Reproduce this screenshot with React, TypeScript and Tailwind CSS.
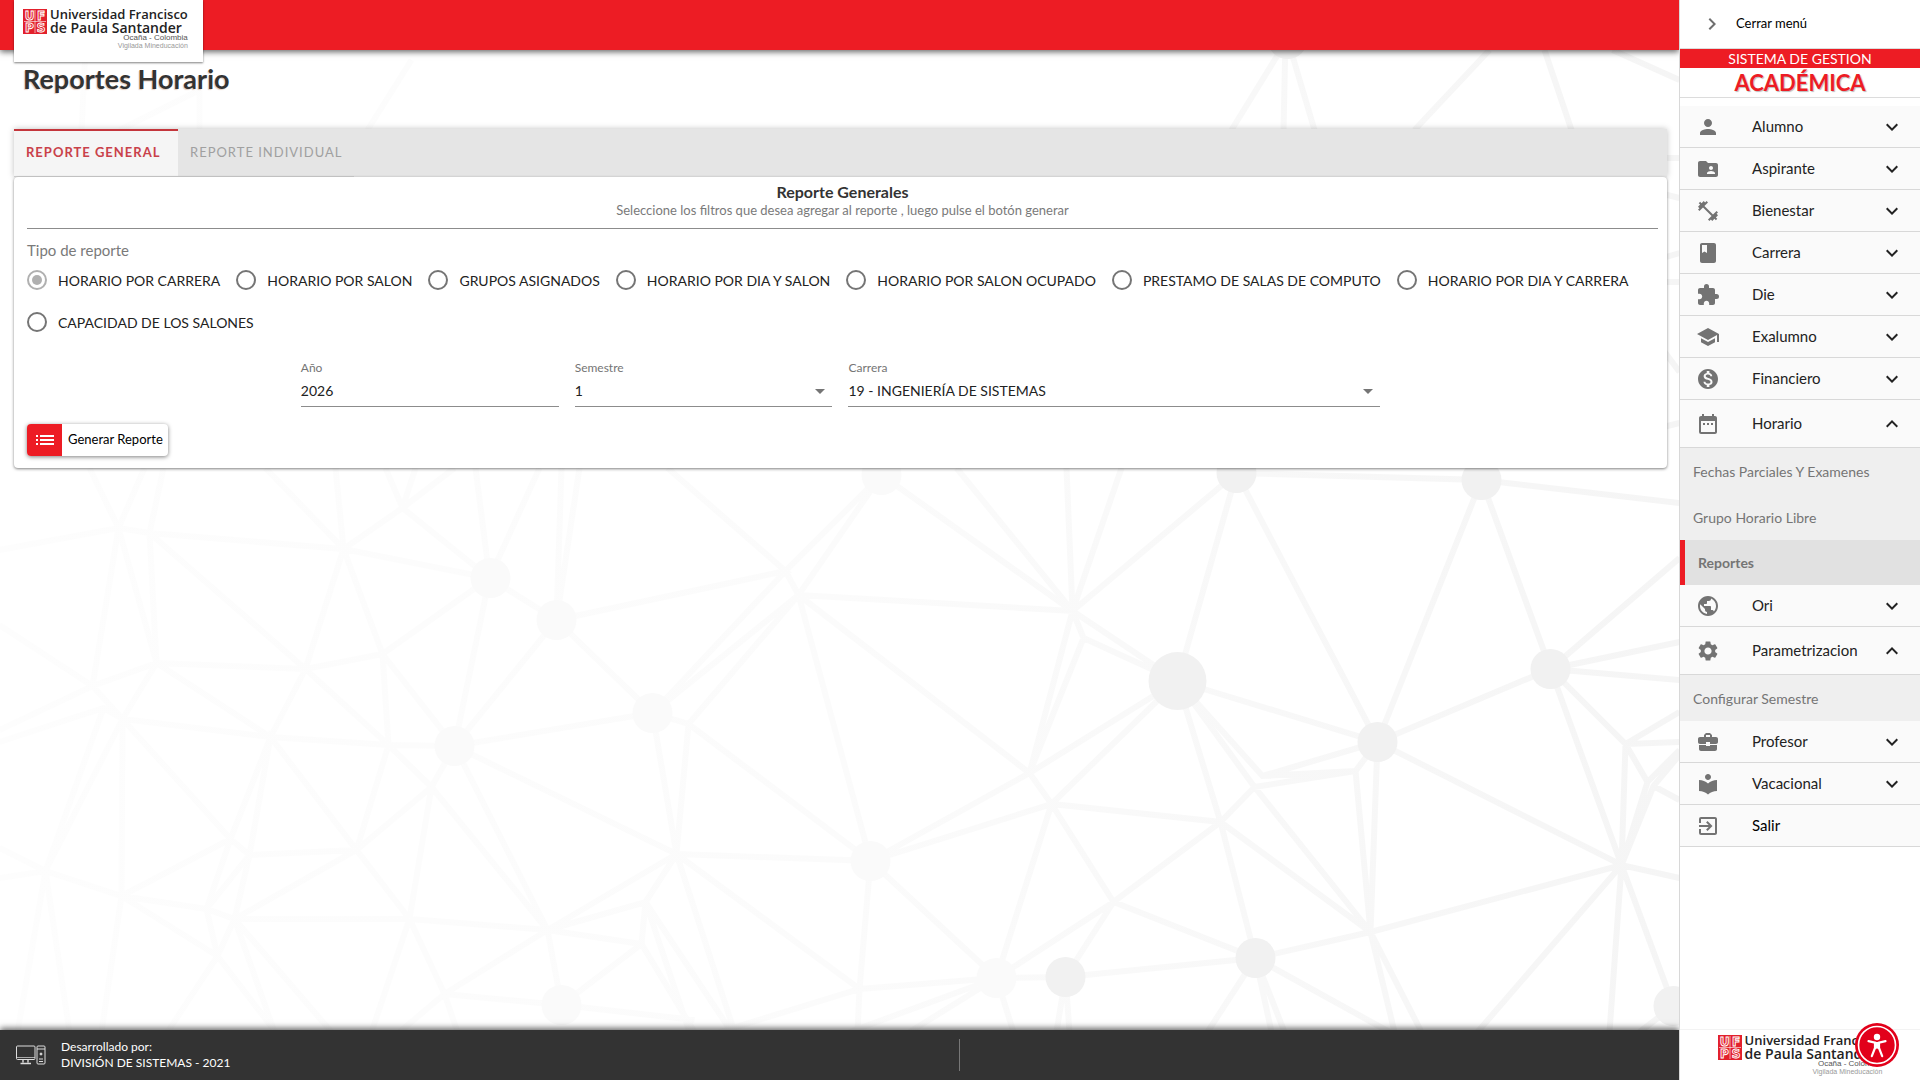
import { useState } from 'react';
import type { IconType } from 'react-icons';
import {
  MdArrowDropDown,
  MdBook,
  MdBusinessCenter,
  MdChevronRight,
  MdDateRange,
  MdExitToApp,
  MdExpandLess,
  MdExpandMore,
  MdExtension,
  MdFitnessCenter,
  MdFolderShared,
  MdList,
  MdLocalLibrary,
  MdMonetizationOn,
  MdPerson,
  MdPublic,
  MdSchool,
  MdSettings,
} from 'react-icons/md';

interface MenuItem {
  label: string;
  icon: IconType;
  children?: string[];
  link?: boolean;
}

const menu: MenuItem[] = [
  { label: 'Alumno', icon: MdPerson },
  { label: 'Aspirante', icon: MdFolderShared },
  { label: 'Bienestar', icon: MdFitnessCenter },
  { label: 'Carrera', icon: MdBook },
  { label: 'Die', icon: MdExtension },
  { label: 'Exalumno', icon: MdSchool },
  { label: 'Financiero', icon: MdMonetizationOn },
  {
    label: 'Horario',
    icon: MdDateRange,
    children: ['Fechas Parciales Y Examenes', 'Grupo Horario Libre', 'Reportes'],
  },
  { label: 'Ori', icon: MdPublic },
  { label: 'Parametrizacion', icon: MdSettings, children: ['Configurar Semestre'] },
  { label: 'Profesor', icon: MdBusinessCenter },
  { label: 'Vacacional', icon: MdLocalLibrary },
  { label: 'Salir', icon: MdExitToApp, link: true },
];

const tipos = [
  'HORARIO POR CARRERA',
  'HORARIO POR SALON',
  'GRUPOS ASIGNADOS',
  'HORARIO POR DIA Y SALON',
  'HORARIO POR SALON OCUPADO',
  'PRESTAMO DE SALAS DE COMPUTO',
  'HORARIO POR DIA Y CARRERA',
  'CAPACIDAD DE LOS SALONES',
];

// x, y, radio
const nodos = [
  [491, 578, 20], [557, 620, 20], [455, 746, 20], [653, 713, 20], [871, 861, 20],
  [562, 1005, 20], [882, 475, 20], [997, 978, 20],
];
const nodosOscuros = [
  [1237, 473, 20], [1482, 480, 20], [1178, 681, 29], [1551, 669, 20], [1378, 742, 20],
  [1066, 977, 20], [1256, 958, 20], [1674, 1006, 20], [1288, 39, 20],
];

const lineas =
  'M0 550L119 528L150 533L344 549L490 578L557 620L653 713L689 724L871 861L997 978L1066 977L1256 958L1371 932L1622 865L1680 878' +
  'M90 468L119 528L145 468M119 528L93 686L0 625M119 528L157 663L150 533L164 468M150 533L306 669L383 654L344 549L266 468M344 549L336 468' +
  'M344 549L403 508L386 468M403 508L416 468M403 508L455 468M403 508L490 578L476 468M490 578L540 468M490 578L383 654L455 746L490 578' +
  'M557 620L562 468M557 620L580 468M557 620L786 571L668 468M557 620L455 746L653 713L786 571L882 475L799 595L786 571M653 713L799 595' +
  'M0 730L93 686L157 663L306 669L344 549M0 742L104 708L123 719L157 663L271 737L306 669L389 745L383 654M93 686L123 719L271 737L389 745L455 746' +
  'M104 708L46 871L123 719L122 896M123 719L231 839L250 855L271 737L357 850L389 745L432 787L455 746L677 854L653 713M677 854L689 724L799 595' +
  'M271 737L231 839L207 909L250 855L357 850L432 787L410 919M432 787L548 930L455 746M0 848L46 871L122 896L207 909L235 919L410 919L548 930L642 944L646 902L548 930' +
  'M0 878L46 871L18 1032M46 871L70 1032M122 896L102 1032M122 896L231 839M122 896L218 956L235 919L357 850L410 919L372 1032M235 919L250 855' +
  'M207 909L218 956L276 1032M218 956L168 1032M235 919L275 1032M235 919L332 1032M410 919L445 994L548 930L562 1005L642 944L695 1032' +
  'M445 994L400 1032M445 994L458 1032M445 994L562 1005L695 1020M548 930L677 854L646 902L690 1032M646 902L732 1032M677 854L735 1032' +
  'M677 854L871 861L860 989L677 854M799 595L871 861M799 595L1030 773M799 595L1073 611L882 475M1073 611L957 468M1073 611L1067 468M1073 611L1122 468' +
  'M1073 611L1237 473L1178 681L1073 611L1084 638L1178 681M1073 611L1030 773L1084 638M1178 681L1030 773L871 861L1052 804L1178 681M1030 773L1052 804' +
  'M1178 681L1378 742L1237 473L1482 480L1378 742L1551 669L1482 480L1680 503M1178 681L1263 776L1356 771L1378 742L1263 776M1178 681L1255 787L1356 771' +
  'M1178 681L1221 822L1255 787L1371 932L1221 822L1052 804L1114 902L1221 822L1256 958L1114 902L1066 977M1052 804L997 978L1114 902' +
  'M1356 771L1371 932L1378 742L1622 865L1551 669L1680 558M1551 669L1680 642M1551 669L1680 680M1551 669L1626 744L1622 865L1648 782L1626 744L1680 742' +
  'M1626 744L1680 712M1622 865L1654 786L1680 755M1648 782L1680 750M1654 786L1680 800M1622 865L1478 1032M1622 865L1610 1032M1622 865L1674 1006L1640 1032' +
  'M1371 932L1395 1032M1371 932L1422 1032M1256 958L1208 1032M1256 958L1272 1032M1256 958L1285 1032M1256 958L1390 1032M1066 977L1057 1032M1066 977L1070 1032' +
  'M997 978L1014 1032M997 978L860 989L720 1032M997 978L850 1032M997 978L910 1032M860 989L858 1032' +
  'M1288 39L1232 130M1286 39L1284 130M1288 39L1315 130M1490 50L1415 130M1545 50L1572 130M1613 50L1680 80' +
  'M1660 158L1680 158M1660 193L1680 198M1660 259L1680 253M1660 282L1680 282M1660 345L1680 372M1660 428L1680 423' +
  'M86 50L82 130M200 90L120 130M200 90L200 130M412 60L368 130';

function Fondo() {
  return (
    <svg
      className="absolute inset-0 -z-10 h-full w-full"
      viewBox="0 0 1680 1080"
      preserveAspectRatio="xMidYMid slice"
      aria-hidden="true"
    >
      <defs>
        <linearGradient id="trazo" gradientUnits="userSpaceOnUse" x1="0" y1="0" x2="1680" y2="0">
          <stop offset="0" stopColor="#fdfdfd" />
          <stop offset="0.5" stopColor="#fbfbfb" />
          <stop offset="1" stopColor="#f5f5f5" />
        </linearGradient>
      </defs>
      <path d={lineas} fill="none" stroke="url(#trazo)" strokeWidth="6" />
      {nodos.map(([x, y, r]) => (
        <circle key={`${x}-${y}`} cx={x} cy={y} r={r} fill="#fafafa" />
      ))}
      {nodosOscuros.map(([x, y, r]) => (
        <circle key={`${x}-${y}`} cx={x} cy={y} r={r} fill="#f1f1f1" />
      ))}
    </svg>
  );
}

function Logo() {
  return (
    <div className="flex items-start gap-[3px] text-[#222]">
      <svg className="mt-px h-[25px] w-6 shrink-0" viewBox="0 0 24 25" aria-hidden="true">
        <rect width="24" height="25" fill="#e2202c" />
        <path d="M1 12.500h22M12 1v23" stroke="#fff" strokeWidth="0.6" />
        <g
          fill="#e2202c"
          stroke="#fff"
          strokeWidth="0.9"
          fontFamily="'DejaVu Sans', sans-serif"
          fontWeight="700"
          fontSize="12"
          textAnchor="middle"
        >
          <text x="6.500" y="11">U</text>
          <text x="18" y="11">F</text>
          <text x="6.500" y="23">P</text>
          <text x="18" y="23">S</text>
        </g>
      </svg>
      <div className="flex flex-col whitespace-nowrap font-['Open_Sans',sans-serif] font-semibold leading-[13px]">
        <span className="text-[13px]">Universidad Francisco</span>
        <span className="text-[14px]">de Paula Santander</span>
        <span className="self-end font-['Liberation_Sans',sans-serif] text-[8px] font-normal leading-[8px] text-[#555]">
          Ocaña - Colombia
        </span>
        <span className="self-end font-['Liberation_Sans',sans-serif] text-[7px] font-normal leading-[7px] text-[#999]">
          Vigilada Mineducación
        </span>
      </div>
    </div>
  );
}

function Sidebar() {
  const [open, setOpen] = useState<string[]>(['Horario', 'Parametrizacion']);

  const toggle = (label: string) => {
    setOpen(open.includes(label) ? open.filter((l) => l !== label) : [...open, label]);
  };

  return (
    <aside className="relative flex w-[241px] shrink-0 flex-col border-l border-[#d8d8d8] bg-white">
      <button type="button" className="flex h-12 items-center gap-3 pl-5 text-[13px] text-black">
        <MdChevronRight className="size-6 text-[#6f6f6f]" />
        Cerrar menú
      </button>
      <div className="border-y border-[#dcdcdc] text-center">
        <p className="bg-[#ed1c24] text-[14px] leading-[19px] text-white">SISTEMA DE GESTION</p>
        <p className="text-[22px] font-bold leading-[29px] text-[#ed1c24] [text-shadow:1px_1px_1px_#bbb]">
          ACADÉMICA
        </p>
      </div>

      <nav className="mt-2">
        {menu.map((item) => {
          const Icon = item.icon;
          const expanded = !!item.children && open.includes(item.label);
          const row = `flex w-full items-center border-b border-[#d8d8d8] bg-[#fafafa] px-4 text-left text-[15px] text-[#222] ${
            expanded ? 'h-12' : 'h-[42px]'
          }`;

          return (
            <div key={item.label}>
              {item.link ? (
                <a href="#salir" className={row}>
                  <Icon className="mr-8 size-6 text-[#737373]" />
                  <span className="text-black">{item.label}</span>
                </a>
              ) : (
                <button type="button" className={row} onClick={() => toggle(item.label)}>
                  <Icon className="mr-8 size-6 text-[#737373]" />
                  <span className="flex-1">{item.label}</span>
                  {expanded ? <MdExpandLess className="size-6" /> : <MdExpandMore className="size-6" />}
                </button>
              )}
              {expanded &&
                item.children?.map((child) => (
                  <a
                    key={child}
                    href="#"
                    className={
                      child === 'Reportes'
                        ? 'flex h-[45px] items-center border-l-[5px] border-[#ed1c24] bg-[#e1e1e1] px-[13px] text-[14px] font-bold text-[#757575]'
                        : 'flex h-[46px] items-center bg-[#efefef] px-[13px] text-[14px] text-[#757575]'
                    }
                  >
                    {child}
                  </a>
                ))}
            </div>
          );
        })}
      </nav>

      <div className="mt-auto flex h-[51px] justify-center border-t border-[#f3f3f3] pt-1">
        <Logo />
      </div>
      <button
        type="button"
        aria-label="Accesibilidad"
        className="absolute right-[21px] bottom-[13px] flex size-11 items-center justify-center rounded-full bg-[#e2001a]"
      >
        <svg viewBox="0 0 44 44" className="size-11" aria-hidden="true">
          <circle cx="22" cy="22" r="18.5" fill="none" stroke="#fff" strokeWidth="1.6" />
          <circle cx="22" cy="14" r="3.2" fill="#fff" />
          <path
            d="M13.5 18.2L20 19.6V25L16.8 33.2M30.5 18.2L24 19.6V25L27.2 33.2"
            fill="none"
            stroke="#fff"
            strokeWidth="2.2"
            strokeLinecap="round"
          />
          <path d="M19 19h6v7.500l-3-1-3 1z" fill="#fff" />
        </svg>
      </button>
    </aside>
  );
}

export default function App() {
  const [tab, setTab] = useState('general');
  const [tipo, setTipo] = useState(tipos[0]);

  const tabClass = (active: boolean) =>
    active
      ? 'min-w-[164px] border-t-2 border-b border-t-[#c4363c] border-b-[#d0d0d0] bg-[#f5f5f5] px-3 pb-[2px] text-left font-bold text-[#c9414a]'
      : 'min-w-[164px] border-t-2 border-b border-t-transparent border-b-[#d0d0d0] px-3 pb-[2px] text-left text-[#a0a0a0]';

  return (
    <div className="flex min-h-screen bg-white font-[Lato,'Noto_Sans',sans-serif]">
      <div className="relative isolate flex min-w-0 flex-1 flex-col">
        <Fondo />
        <header className="flex h-[50px] items-start bg-[#ed1c24] px-[14px] shadow-[0_2px_6px_rgba(0,0,0,0.6)]">
          <div className="h-[62px] w-[189px] bg-white px-[9px] pt-2 shadow-[0_1px_2px_rgba(0,0,0,0.5)]">
            <Logo />
          </div>
        </header>

        <main className="flex-1 pl-[14px] pr-3">
          <h1 className="pt-3 pl-[9px] text-[27px] font-bold leading-[34px] text-[#333] [text-shadow:-1px_1px_1px_#e3cfc3]">
            Reportes Horario
          </h1>

          <div className="mt-[33px] flex h-12 bg-[#e5e5e5] text-[13px] tracking-[1px] shadow-[0_0_6px_rgba(0,0,0,0.25)]">
            <button type="button" className={tabClass(tab === 'general')} onClick={() => setTab('general')}>
              REPORTE GENERAL
            </button>
            <button type="button" className={tabClass(tab === 'individual')} onClick={() => setTab('individual')}>
              REPORTE INDIVIDUAL
            </button>
          </div>

          <section className="relative rounded bg-white px-[13px] pt-[6px] pb-3 shadow-[0_1px_3px_rgba(0,0,0,0.5)]">
            <div className="-mr-1 border-b border-[#8c8c8c] pb-[9px] text-center">
              <h2 className="text-[16px] font-bold leading-[18px] text-[#333]">Reporte Generales</h2>
              <p className="text-[13px] leading-[18px] text-[#7a7a7a]">
                Seleccione los filtros que desea agregar al reporte , luego pulse el botón generar
              </p>
            </div>

            <fieldset>
              <legend className="pt-3 text-[15px] leading-[18px] text-[#7a7a7a]">Tipo de reporte</legend>
              <div className="flex flex-wrap gap-x-4">
                {tipos.map((t) => (
                  <label key={t} className="flex h-[42px] items-center gap-[11px] text-[14px] text-[#222]">
                    <input
                      type="radio"
                      name="tipo"
                      checked={tipo === t}
                      onChange={() => setTipo(t)}
                      className="grid size-5 appearance-none place-content-center rounded-full border-2 border-[#757575] before:size-[10px] before:rounded-full checked:border-[#b0b0b0] checked:before:bg-[#b0b0b0]"
                    />
                    {t}
                  </label>
                ))}
              </div>
            </fieldset>

            <div className="mt-[18px] grid grid-cols-12 gap-x-4 text-[14px] text-[#222]">
              <div className="col-span-2 col-start-3 flex flex-col border-b border-[#8c8c8c]">
                <label htmlFor="anio" className="text-[12px] leading-[14px] text-[#757575]">Año</label>
                <input id="anio" defaultValue="2026" className="h-[31px] w-full bg-transparent outline-none" />
              </div>
              <div className="relative col-span-2 flex flex-col border-b border-[#8c8c8c]">
                <label htmlFor="semestre" className="text-[12px] leading-[14px] text-[#757575]">Semestre</label>
                <select id="semestre" className="h-[31px] w-full appearance-none bg-transparent outline-none">
                  <option>1</option>
                  <option>2</option>
                </select>
                <MdArrowDropDown className="pointer-events-none absolute right-0 bottom-[3px] size-6 text-[#757575]" />
              </div>
              <div className="relative col-span-4 flex flex-col border-b border-[#8c8c8c]">
                <label htmlFor="carrera" className="text-[12px] leading-[14px] text-[#757575]">Carrera</label>
                <select id="carrera" className="h-[31px] w-full appearance-none bg-transparent outline-none">
                  <option>19 - INGENIERÍA DE SISTEMAS</option>
                </select>
                <MdArrowDropDown className="pointer-events-none absolute right-0 bottom-[3px] size-6 text-[#757575]" />
              </div>
            </div>

            <button
              type="button"
              className="mt-[17px] flex h-8 items-center overflow-hidden rounded bg-white pr-[5px] text-[13px] text-black shadow-[0_1px_4px_rgba(0,0,0,0.5)]"
            >
              <span className="mr-[6px] flex h-8 w-[35px] items-center justify-center bg-[#ed1c24] text-white">
                <MdList className="size-6" />
              </span>
              Generar Reporte
            </button>
          </section>
        </main>

        <footer className="grid h-[50px] grid-cols-[4fr_3fr] items-center bg-[#333] text-[12px] leading-4 text-white shadow-[0_-2px_6px_rgba(0,0,0,0.6)]">
          <div className="flex items-center gap-[15px] pl-4">
            <svg viewBox="0 0 30 20" className="h-5 w-[30px]" fill="none" stroke="#ddd" aria-hidden="true">
              <rect x="0.5" y="1" width="18.500" height="13.500" rx="1" />
              <path d="M1 12.500h18" strokeWidth="0.7" />
              <path d="M7 15v2.500M12 15v2.500M4.500 18.500h10.500" strokeWidth="1.400" />
              <rect x="21" y="1" width="8" height="18" rx="1" />
              <path d="M21 4h8M23 14h4M23 16.500h4" />
              <circle cx="25" cy="9" r="1" fill="#ddd" />
            </svg>
            <p>
              Desarrollado por:
              <br />
              DIVISIÓN DE SISTEMAS - 2021
            </p>
          </div>
          <div className="h-8 border-l border-[#777]" />
        </footer>
      </div>

      <Sidebar />
    </div>
  );
}
